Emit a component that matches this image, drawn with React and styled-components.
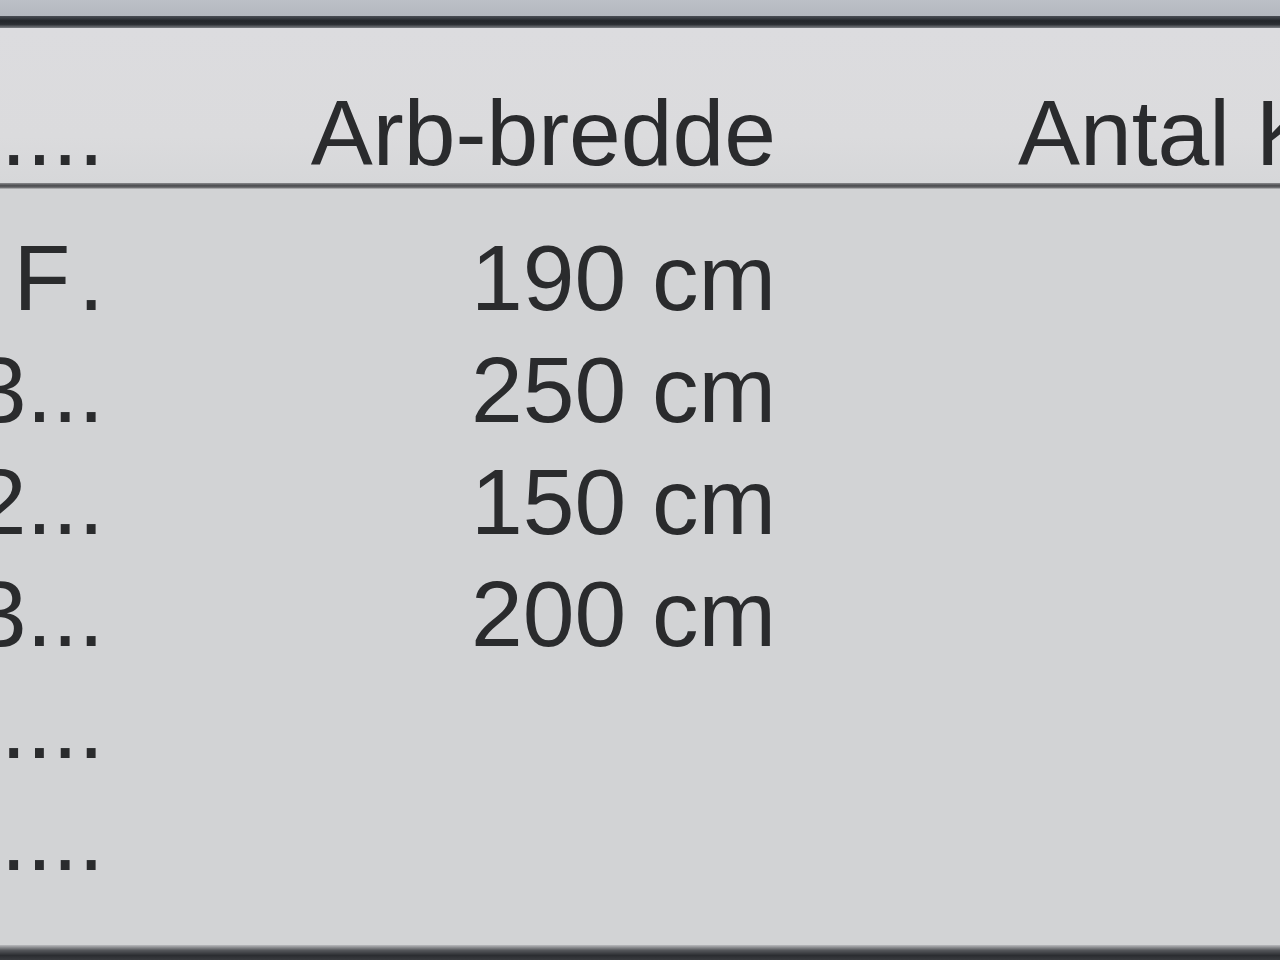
import React from "react";
import styled, { createGlobalStyle } from "styled-components";

const GlobalStyle = createGlobalStyle`
    html, body {
        margin: 0;
        padding: 0;
        background: #d2d3d5;
        overflow: hidden;
    }
`;

const Page = styled.div`
    width: 1280px;
    height: 960px;
    display: flex;
    flex-direction: column;
    overflow: hidden;
    background-color: #d2d3d5;
    font-family: "Liberation Sans", Arial, sans-serif;
    color: #2a2b2d;
`;

const TopStrip = styled.div`
    height: 16px;
    flex-shrink: 0;
    background: linear-gradient(#bcc0c7, #b4b8bf);
`;

const Frame = styled.div`
    height: 12px;
    flex-shrink: 0;
    background: linear-gradient(#4a4e55, #23262b 40%, #2b2e33 70%, #7c7f84);
`;

const Header = styled.div`
    height: 155px;
    flex-shrink: 0;
    display: grid;
    grid-template-columns: 104px 672px 242px 1fr;
    align-items: end;
    background: linear-gradient(#dcdcdf, #dbdbdd 70%, #d6d7d9);
    font-size: 93px;
    line-height: 100px;
`;

const HeaderRule = styled.div`
    height: 6px;
    flex-shrink: 0;
    background: linear-gradient(#8a8b8e, #4f5053 40%, #5d5e61 70%, #c4c5c7);
`;

const Body = styled.div`
    flex: 1;
    display: flex;
    flex-direction: column;
    padding-top: 33px;
    font-size: 93px;
    line-height: 112px;
`;

const Row = styled.div`
    display: grid;
    grid-template-columns: 104px 672px 242px 1fr;
    height: 112px;
`;

const Cell = styled.div`
    display: flex;
    justify-content: ${({ align }) => (align === "right" ? "flex-end" : "flex-start")};
    overflow: hidden;
    white-space: nowrap;
`;

const BottomFrame = styled.div`
    height: 15px;
    flex-shrink: 0;
    background: linear-gradient(#b9babd, #55575b 35%, #2b2d31 70%, #3a3c40);
`;

const rows = [
    { name: "F\u200A.", width: "190 cm" },
    { name: "3...", width: "250 cm" },
    { name: "2...", width: "150 cm" },
    { name: "3...", width: "200 cm" },
    { name: "....", width: "" },
    { name: "....", width: "" },
];

export default function App() {
    return (
        <>
            <GlobalStyle />
            <Page>
                <TopStrip />
                <Frame />
                <Header>
                    <Cell align="right">....</Cell>
                    <Cell align="right">Arb-bredde</Cell>
                    <Cell />
                    <Cell>Antal Knive</Cell>
                </Header>
                <HeaderRule />
                <Body>
                    {rows.map((r, i) => (
                        <Row key={i}>
                            <Cell align="right">{r.name}</Cell>
                            <Cell align="right">{r.width}</Cell>
                            <Cell />
                            <Cell />
                        </Row>
                    ))}
                </Body>
                <BottomFrame />
            </Page>
        </>
    );
}
